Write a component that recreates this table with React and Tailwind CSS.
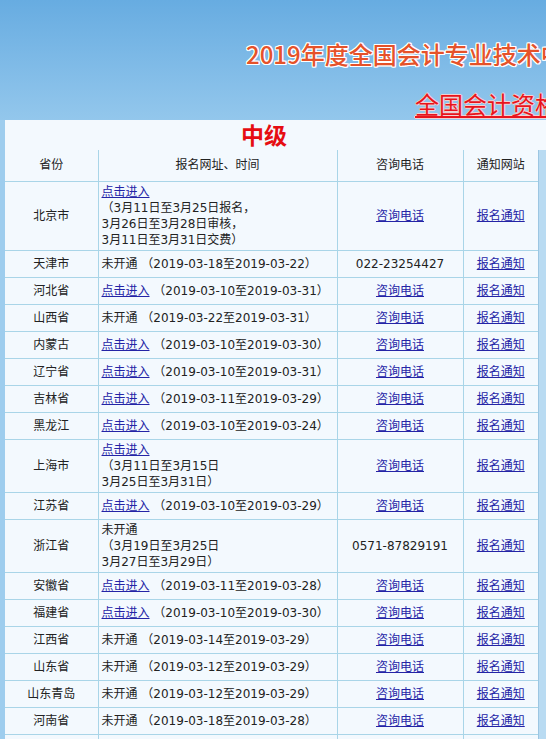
import React from "react";

const L = ({ children }) => (
  <a href="#" className="text-[#2424a6] underline">
    {children}
  </a>
);

const rows = [
  { p: "北京市", link: true, lines: ["（3月11日至3月25日报名，", "3月26日至3月28日审核，", "3月11日至3月31日交费）"] },
  { p: "天津市", link: false, d: "2019-03-18至2019-03-22", phone: "022-23254427" },
  { p: "河北省", link: true, d: "2019-03-10至2019-03-31" },
  { p: "山西省", link: false, d: "2019-03-22至2019-03-31" },
  { p: "内蒙古", link: true, d: "2019-03-10至2019-03-30" },
  { p: "辽宁省", link: true, d: "2019-03-10至2019-03-31" },
  { p: "吉林省", link: true, d: "2019-03-11至2019-03-29" },
  { p: "黑龙江", link: true, d: "2019-03-10至2019-03-24" },
  { p: "上海市", link: true, lines: ["（3月11日至3月15日", "3月25日至3月31日）"] },
  { p: "江苏省", link: true, d: "2019-03-10至2019-03-29" },
  { p: "浙江省", link: false, lines: ["（3月19日至3月25日", "3月27日至3月29日）"], phone: "0571-87829191" },
  { p: "安徽省", link: true, d: "2019-03-11至2019-03-28" },
  { p: "福建省", link: true, d: "2019-03-10至2019-03-30" },
  { p: "江西省", link: false, d: "2019-03-14至2019-03-29" },
  { p: "山东省", link: false, d: "2019-03-12至2019-03-29" },
  { p: "山东青岛", link: false, d: "2019-03-12至2019-03-29" },
  { p: "河南省", link: false, d: "2019-03-18至2019-03-28" },
  { p: "湖北省", link: true, d: "2019-03-10至2019-03-24" },
  { p: "湖南省", link: false, d: "2019-03-11至2019-03-25" },
];

const td = "border-b border-[#a9d5e8] align-middle";

export default function App() {
  return (
    <div
      className="w-[546px] h-[739px] overflow-hidden bg-[#9ecdee] text-[12px] leading-[16px] text-[#222]"
      style={{ fontFamily: '"DejaVu Sans", "Noto Sans CJK SC", sans-serif' }}
    >
      <div
        className="h-[120px] bg-gradient-to-b from-[#67ace1] to-[#93c7ec] overflow-hidden whitespace-nowrap"
        style={{ fontFamily: '"Noto Sans CJK SC", sans-serif' }}
      >
        <div className="pt-[39px] pl-[246px] text-[24px] leading-[30px] font-medium text-[#e5522a] [text-shadow:1px_0_0_#fff,-1px_0_0_#fff,0_1px_0_#fff,0_-1px_0_#fff,1px_1px_0_#fff,-1px_-1px_0_#fff,1px_-1px_0_#fff,-1px_1px_0_#fff]">
          2019年度全国会计专业技术中级资格考试报名入口
        </div>
        <div className="mt-[20px] pl-[415px] text-[24px] leading-[30px]">
          <a href="#" className="text-[#e8141c] underline decoration-[#e8141c] [text-shadow:1px_0_0_#f3d0d0,-1px_0_0_#f3d0d0,0_1px_0_#f3d0d0,0_-1px_0_#f3d0d0]">
            全国会计资格评价网
          </a>
        </div>
      </div>
      <div className="ml-[5px] bg-[#f3f9fe]">
        <div className="h-[30px] pl-[236px] pt-[1px] text-[23px] leading-[30px] font-bold text-[#e60d12]">
          中级
        </div>
        <div className="flex">
          <table className="w-[533px] table-fixed border-collapse bg-[#f3f9fe]">
            <colgroup>
              <col className="w-[93px]" />
              <col className="w-[239px]" />
              <col className="w-[126px]" />
              <col className="w-[75px]" />
            </colgroup>
            <thead>
              <tr className="h-[31px]">
                <th className={`${td} font-normal text-center`}>省份</th>
                <th className={`${td} font-normal text-center border-l`}>报名网址、时间</th>
                <th className={`${td} font-normal text-center border-l`}>咨询电话</th>
                <th className={`${td} font-normal text-center border-l`}>通知网站</th>
              </tr>
            </thead>
            <tbody>
              {rows.map((r) => (
                <tr key={r.p} className="h-[27px]">
                  <td className={`${td} text-center py-[2px]`}>{r.p}</td>
                  <td className={`${td} border-l py-[2px] pl-[3px] pr-[2px]`}>
                    {r.lines ? (
                      <>
                        {r.link ? <L>点击进入</L> : "未开通"}
                        {r.lines.map((l, i) => (
                          <div key={i}>{l}</div>
                        ))}
                      </>
                    ) : (
                      <span className="whitespace-nowrap">
                        {r.link ? <L>点击进入</L> : "未开通"} （{r.d}）
                      </span>
                    )}
                  </td>
                  <td className={`${td} border-l text-center py-[2px]`}>
                    {r.phone ? r.phone : <L>咨询电话</L>}
                  </td>
                  <td className={`${td} border-l text-center py-[2px]`}>
                    <L>报名通知</L>
                  </td>
                </tr>
              ))}
            </tbody>
          </table>
          <div className="flex-1 border-l border-[#9cc6e2] bg-[#b9dbf2]" />
        </div>
      </div>
    </div>
  );
}
